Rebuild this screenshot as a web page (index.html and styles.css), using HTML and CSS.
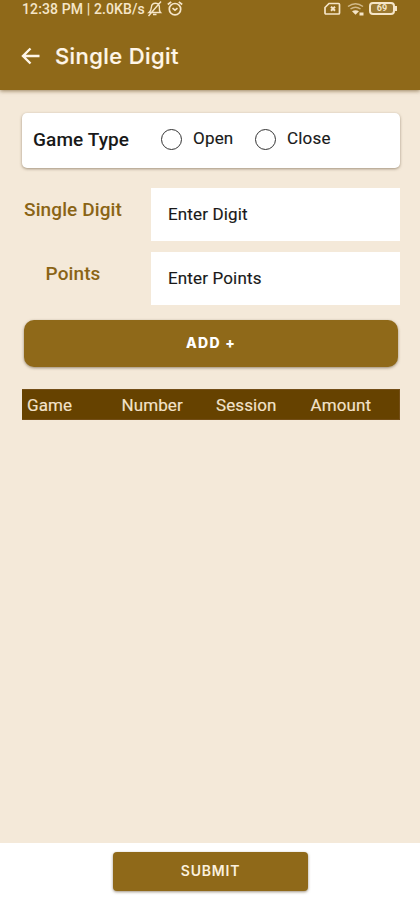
FILE: index.html
```
<!DOCTYPE html>
<html lang="en">
<head>
<meta charset="utf-8">
<title>Single Digit</title>
<link rel="stylesheet" href="styles.css">
</head>
<body>
<div class="screen">
  <header class="header">
    <div class="status">
      <span class="clock">12:38 PM | 2.0KB/s</span>
      <svg class="bell" width="16" height="16" viewBox="0 0 16 16" fill="none" stroke="currentColor" stroke-width="1.4"><path d="M2 11.500h11.500c-1.300-1.200-1.300-2.500-1.100-4.500.2-2.800-1.300-4.500-3.600-4.700C6 2.100 4.600 3.900 4.400 6.200 4.200 9 3.500 10.300 2 11.500zM6 13.500h3.500M1.500 15 14 .5"/></svg>
      <svg class="alarm" width="16" height="16" viewBox="0 0 16 16" fill="none" stroke="currentColor" stroke-width="1.700"><circle cx="8" cy="8.200" r="5.700"/><path d="M.8 3.500 4.200.8M15.200 3.500 11.800.8M5.500 7.200 8 9.200l2.500-2"/></svg>
      <span class="spacer"></span>
      <svg class="sim" width="17" height="14" viewBox="0 0 17 14" fill="none" stroke="currentColor" stroke-width="1.700"><path d="M5 1.500h9.500q1 0 1 1v8.500q0 1-1 1H2q-1 0-1-1V5.500z"/><path d="M7 4.800l4 4M11 4.800l-4 4" stroke-width="2"/></svg>
      <svg class="wifi" width="18" height="14" viewBox="0 0 18 14" fill="none" stroke="currentColor" stroke-width="1.500"><path opacity=".65" d="M1 4.500q7.500-5.500 15 0M3.500 7q5-3.500 10 0"/><path d="M5 9.300Q8.500 7.300 12 9.300L8.500 12.800z" fill="currentColor" stroke="none"/><path d="M12.500 12h4" stroke-width="3"/></svg>
      <span class="battery">69</span>
    </div>
    <div class="toolbar">
      <svg width="20" height="20" viewBox="0 0 20 20" fill="none" stroke="currentColor" stroke-width="2.400"><path d="M18.500 10H2M9.500 2.500 2 10l7.500 7.500"/></svg>
      <h1>Single Digit</h1>
    </div>
  </header>
  <main>
    <section class="card">
      <span class="type">Game Type</span>
      <span class="radio"></span><span class="option open">Open</span>
      <span class="radio"></span><span class="option">Close</span>
    </section>
    <div class="field"><span class="label">Single Digit</span><div class="input">Enter Digit</div></div>
    <div class="field"><span class="label">Points</span><div class="input">Enter Points</div></div>
    <div class="add">ADD +</div>
    <div class="table-head"><span>Game</span><span>Number</span><span>Session</span><span>Amount</span></div>
  </main>
  <footer><div class="submit">SUBMIT</div></footer>
</div>
</body>
</html>
```
FILE: styles.css
```
* { box-sizing: border-box; }
body { margin: 0; font-family: Roboto, sans-serif; color: #191919; }
.screen { width: 420px; height: 900px; display: flex; flex-direction: column; background: #f4e9d9; overflow: hidden; }
.header { height: 90px; flex: none; background: #8f6919; color: #fff6e8; box-shadow: 0 1px 4px #765c30bb; }
.status { height: 18px; display: flex; align-items: center; padding: 0 25px 1px 22px; color: #f5e5c8; }
.clock { font-size: 14px; font-weight: 500; letter-spacing: .12px; width: 124px; padding-top: 1px; white-space: nowrap; }
.bell { margin-left: 1px; }
.alarm { margin-left: 4px; }
.spacer { flex: 1; }
.wifi { margin: 1px 4px 0 6px; }
.battery { position: relative; width: 26px; height: 13px; border: 2px solid; border-radius: 4px; font-size: 9px; font-weight: 700; line-height: 9px; text-align: center; background: #9b7932; }
.battery::after { content: ""; position: absolute; right: -4px; top: 2px; width: 2px; height: 5px; background: currentColor; }
.toolbar { height: 72px; padding: 1px 0 0 21px; display: flex; align-items: center; }
.toolbar svg { margin-top: 3px; }
h1 { margin: 0 0 0 14px; font: 500 22px/30px Inter, sans-serif; letter-spacing: .4px; padding-top: 2px; -webkit-text-stroke: .2px; }
main { flex: 1; padding: 23px 20px 0 22px; }
.card { height: 55px; margin-bottom: 20px; padding: 0 11px; background: #fff; border-radius: 5px; box-shadow: 0 1px 3px #6b583f99; display: flex; align-items: center; }
.type { width: 128px; padding-bottom: 3px; font-size: 19px; font-weight: 500; letter-spacing: .1px; }
.radio { width: 21px; height: 21px; margin-bottom: 2px; border: 1.500px solid #333; border-radius: 50%; }
.option { margin-left: 11px; padding-bottom: 5px; font-size: 17px; letter-spacing: .2px; -webkit-text-stroke: .15px; }
.open { width: 62px; }
.field { display: flex; height: 53px; margin-bottom: 11px; }
.label { width: 129px; padding: 0 27px 10px 0; display: flex; align-items: center; justify-content: center; color: #8a6415; font-size: 19px; font-weight: 500; letter-spacing: .1px; white-space: nowrap; }
.input { width: 249px; padding: 0 0 2px 17px; display: flex; align-items: center; background: #fff; font-size: 17px; letter-spacing: .15px; -webkit-text-stroke: .15px; }
.add { height: 47px; margin: 15px 2px 22px; background: #8f6919; color: #fff; border-radius: 10px; box-shadow: 0 1px 3px #5e4a2b99; font: 800 14px/46px Inter, sans-serif; letter-spacing: 1.300px; text-align: center; }
.table-head { height: 31px; display: grid; grid-template-columns: repeat(4, 94.500px); padding-left: 5px; background: #664200; border: 1px solid #734e17; border-left: 0; color: #f3e2ca; font-size: 17px; line-height: 30px; width: 378px; overflow: hidden; letter-spacing: .1px; -webkit-text-stroke: .15px; }
footer { height: 57px; flex: none; padding-top: 9px; background: #fff; }
.submit { width: 195px; height: 39px; margin-left: 113px; background: #8f6919; color: #fbf0de; border-radius: 4px; box-shadow: 0 1px 3px #5e4a2b99; font: 600 14px/38px Inter, sans-serif; letter-spacing: .8px; text-align: center; }
```
